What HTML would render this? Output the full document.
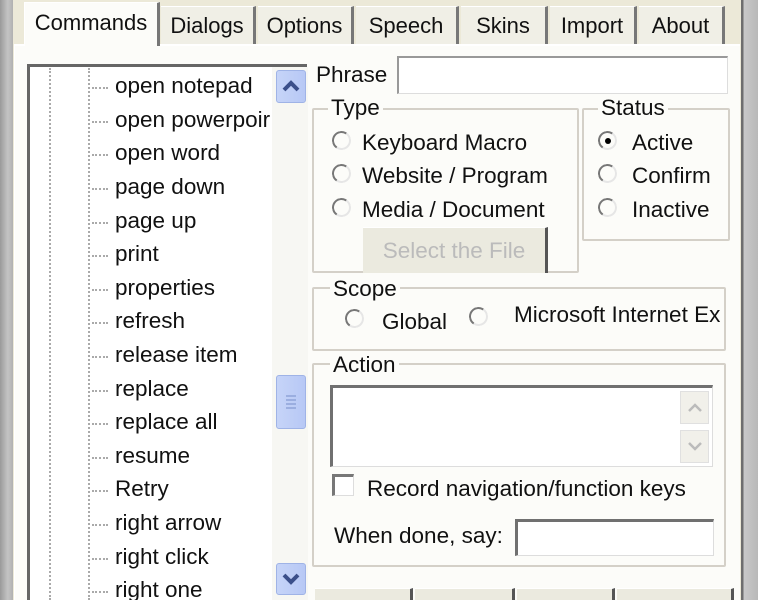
<!DOCTYPE html>
<html><head><meta charset="utf-8"><style>
*{margin:0;padding:0;box-sizing:border-box}
html,body{width:758px;height:600px;overflow:hidden}
body{background:#ece9d8;font-family:"Liberation Sans",Tahoma,sans-serif;font-size:22.5px;color:#111;position:relative}
.a{position:absolute}
.lbar{left:0;top:0;width:13px;height:600px;background:linear-gradient(90deg,#9a9a9a,#c4c4c4 60%,#b0b0b0)}
.rbar{left:741px;top:0;width:17px;height:600px;background:linear-gradient(90deg,#6e6e6e 0,#6e6e6e 2px,#c8c8c8 3px,#b8b8b8)}
.page{left:14px;top:44px;width:726px;height:556px;background:#fcfcf9;border-top:2px solid #fff;border-left:1px solid #fff}
.tab{top:6px;height:38px;background:#f0efe6;border-right:3px solid #777;border-top:1px solid #fff;text-align:center;line-height:38px;font-size:22px}
.tab.sel{top:2px;height:44px;background:#fcfcf9;border-left:1px solid #fff;line-height:40px}
.tree{left:27px;top:64px;width:280px;height:540px;background:#fff;border-top:3px solid #666;border-left:3px solid #666}
.vd{width:0;border-left:2px dotted #aaa}
.hd{height:0;width:16px;border-top:2px dotted #aaa}
.it{left:115px;line-height:34px;height:34px;white-space:nowrap;font-size:22.5px}
.sb{left:276px;width:30px;border-radius:3px;background:linear-gradient(90deg,#c6d4f8,#b7c8f5);border:1px solid #9fb3e6}
.gb{border:2px solid #d4d0c8;border-radius:2px}
.gl{background:#fcfcf9;padding:0 3px;line-height:22px}
.r{width:19px;height:19px;border-radius:50%;border:2px solid;border-color:#777 #e6e6e6 #e6e6e6 #777;transform:rotate(-10deg)}
.in{background:#fff;border-top:3px solid #707070;border-left:3px solid #707070;border-right:1px solid #ddd;border-bottom:1px solid #ddd}
.btn{background:#ebeadf;border-right:3px solid #555;border-top:1px solid #fff}
</style></head><body>
<div class="a lbar"></div>
<div class="a page"></div>
<div class="a rbar"></div>
<div class="a tab sel" style="left:24px;width:136px">Commands</div>
<div class="a tab" style="left:161px;width:95px">Dialogs</div>
<div class="a tab" style="left:258px;width:96px">Options</div>
<div class="a tab" style="left:356px;width:103px">Speech</div>
<div class="a tab" style="left:461px;width:87px">Skins</div>
<div class="a tab" style="left:550px;width:87px">Import</div>
<div class="a tab" style="left:639px;width:86px">About</div>

<div class="a tree"></div>
<div class="a vd" style="left:49px;top:68px;height:532px"></div>
<div class="a vd" style="left:88px;top:68px;height:532px"></div>
<div class="a hd" style="left:92px;top:87px"></div><div class="a it" style="top:69px">open notepad</div>
<div class="a hd" style="left:92px;top:121px"></div><div class="a it" style="top:103px">open powerpoir</div>
<div class="a hd" style="left:92px;top:154px"></div><div class="a it" style="top:136px">open word</div>
<div class="a hd" style="left:92px;top:188px"></div><div class="a it" style="top:170px">page down</div>
<div class="a hd" style="left:92px;top:222px"></div><div class="a it" style="top:204px">page up</div>
<div class="a hd" style="left:92px;top:255px"></div><div class="a it" style="top:237px">print</div>
<div class="a hd" style="left:92px;top:289px"></div><div class="a it" style="top:271px">properties</div>
<div class="a hd" style="left:92px;top:322px"></div><div class="a it" style="top:304px">refresh</div>
<div class="a hd" style="left:92px;top:356px"></div><div class="a it" style="top:338px">release item</div>
<div class="a hd" style="left:92px;top:390px"></div><div class="a it" style="top:372px">replace</div>
<div class="a hd" style="left:92px;top:423px"></div><div class="a it" style="top:405px">replace all</div>
<div class="a hd" style="left:92px;top:457px"></div><div class="a it" style="top:439px">resume</div>
<div class="a hd" style="left:92px;top:490px"></div><div class="a it" style="top:472px">Retry</div>
<div class="a hd" style="left:92px;top:524px"></div><div class="a it" style="top:506px">right arrow</div>
<div class="a hd" style="left:92px;top:558px"></div><div class="a it" style="top:540px">right click</div>
<div class="a hd" style="left:92px;top:591px"></div><div class="a it" style="top:573px">right one</div>
<div class="a" style="left:272px;top:67px;width:36px;height:533px;background:#f7f7f3"></div>
<div class="a sb" style="top:70px;height:33px"><svg width="28" height="31"><path d="M7 19 L14 12 L21 19" stroke="#3b4f8a" stroke-width="4" fill="none"/></svg></div>
<div class="a sb" style="top:375px;height:54px"><svg width="28" height="52"><path d="M9 20h10M9 24h10M9 28h10M9 32h10" stroke="#8fa4d8" stroke-width="1.5"/></svg></div>
<div class="a sb" style="top:563px;height:32px"><svg width="28" height="30"><path d="M7 11 L14 18 L21 11" stroke="#3b4f8a" stroke-width="4" fill="none"/></svg></div>

<div class="a" style="left:316px;top:62px">Phrase</div>
<div class="a in" style="left:397px;top:56px;width:331px;height:38px;border-width:2px 1px 1px 2px;border-color:#999 #ddd #ddd #999"></div>

<div class="a gb" style="left:312px;top:108px;width:267px;height:165px"></div>
<div class="a gl" style="left:328px;top:97px">Type</div>
<div class="a r" style="left:332px;top:131px"></div><div class="a" style="left:362px;top:130px">Keyboard Macro</div>
<div class="a r" style="left:332px;top:164px"></div><div class="a" style="left:362px;top:163px">Website / Program</div>
<div class="a r" style="left:332px;top:198px"></div><div class="a" style="left:362px;top:197px">Media / Document</div>
<div class="a btn" style="left:363px;top:227px;width:185px;height:46px;color:#bbb;text-align:center;line-height:46px">Select the File</div>

<div class="a gb" style="left:582px;top:108px;width:148px;height:133px"></div>
<div class="a gl" style="left:598px;top:97px">Status</div>
<div class="a r" style="left:598px;top:131px"></div><div class="a" style="left:605px;top:138px;width:6px;height:6px;border-radius:50%;background:#000"></div><div class="a" style="left:632px;top:130px">Active</div>
<div class="a r" style="left:598px;top:164px"></div><div class="a" style="left:632px;top:163px">Confirm</div>
<div class="a r" style="left:598px;top:198px"></div><div class="a" style="left:632px;top:197px">Inactive</div>

<div class="a gb" style="left:312px;top:287px;width:414px;height:64px"></div>
<div class="a gl" style="left:330px;top:278px">Scope</div>
<div class="a r" style="left:345px;top:309px"></div><div class="a" style="left:382px;top:309px">Global</div>
<div class="a r" style="left:469px;top:307px"></div><div class="a" style="left:514px;top:302px;width:206px;overflow:hidden;white-space:nowrap">Microsoft Internet Explorer</div>

<div class="a gb" style="left:312px;top:363px;width:414px;height:204px"></div>
<div class="a gl" style="left:330px;top:354px">Action</div>
<div class="a in" style="left:330px;top:385px;width:383px;height:82px"></div>
<div class="a" style="left:680px;top:391px;width:29px;height:33px;background:#f1f0ea;border:1px solid #e0e0e0"><svg width="27" height="31"><path d="M8 19 L14 13 L20 19" stroke="#bbb" stroke-width="2.5" fill="none"/></svg></div>
<div class="a" style="left:680px;top:430px;width:29px;height:33px;background:#f1f0ea;border:1px solid #e0e0e0"><svg width="27" height="31"><path d="M8 12 L14 18 L20 12" stroke="#bbb" stroke-width="2.5" fill="none"/></svg></div>
<div class="a" style="left:332px;top:474px;width:22px;height:22px;border-top:3px solid #777;border-left:3px solid #777;border-right:1px solid #ddd;border-bottom:1px solid #ddd;background:#fff"></div>
<div class="a" style="left:367px;top:476px">Record navigation/function keys</div>
<div class="a" style="left:334px;top:523px">When done, say:</div>
<div class="a in" style="left:515px;top:519px;width:199px;height:37px"></div>

<div class="a btn" style="left:315px;top:588px;width:98px;height:20px"></div>
<div class="a btn" style="left:415px;top:588px;width:100px;height:20px"></div>
<div class="a btn" style="left:517px;top:588px;width:98px;height:20px"></div>
<div class="a btn" style="left:617px;top:588px;width:117px;height:20px"></div>
</body></html>
